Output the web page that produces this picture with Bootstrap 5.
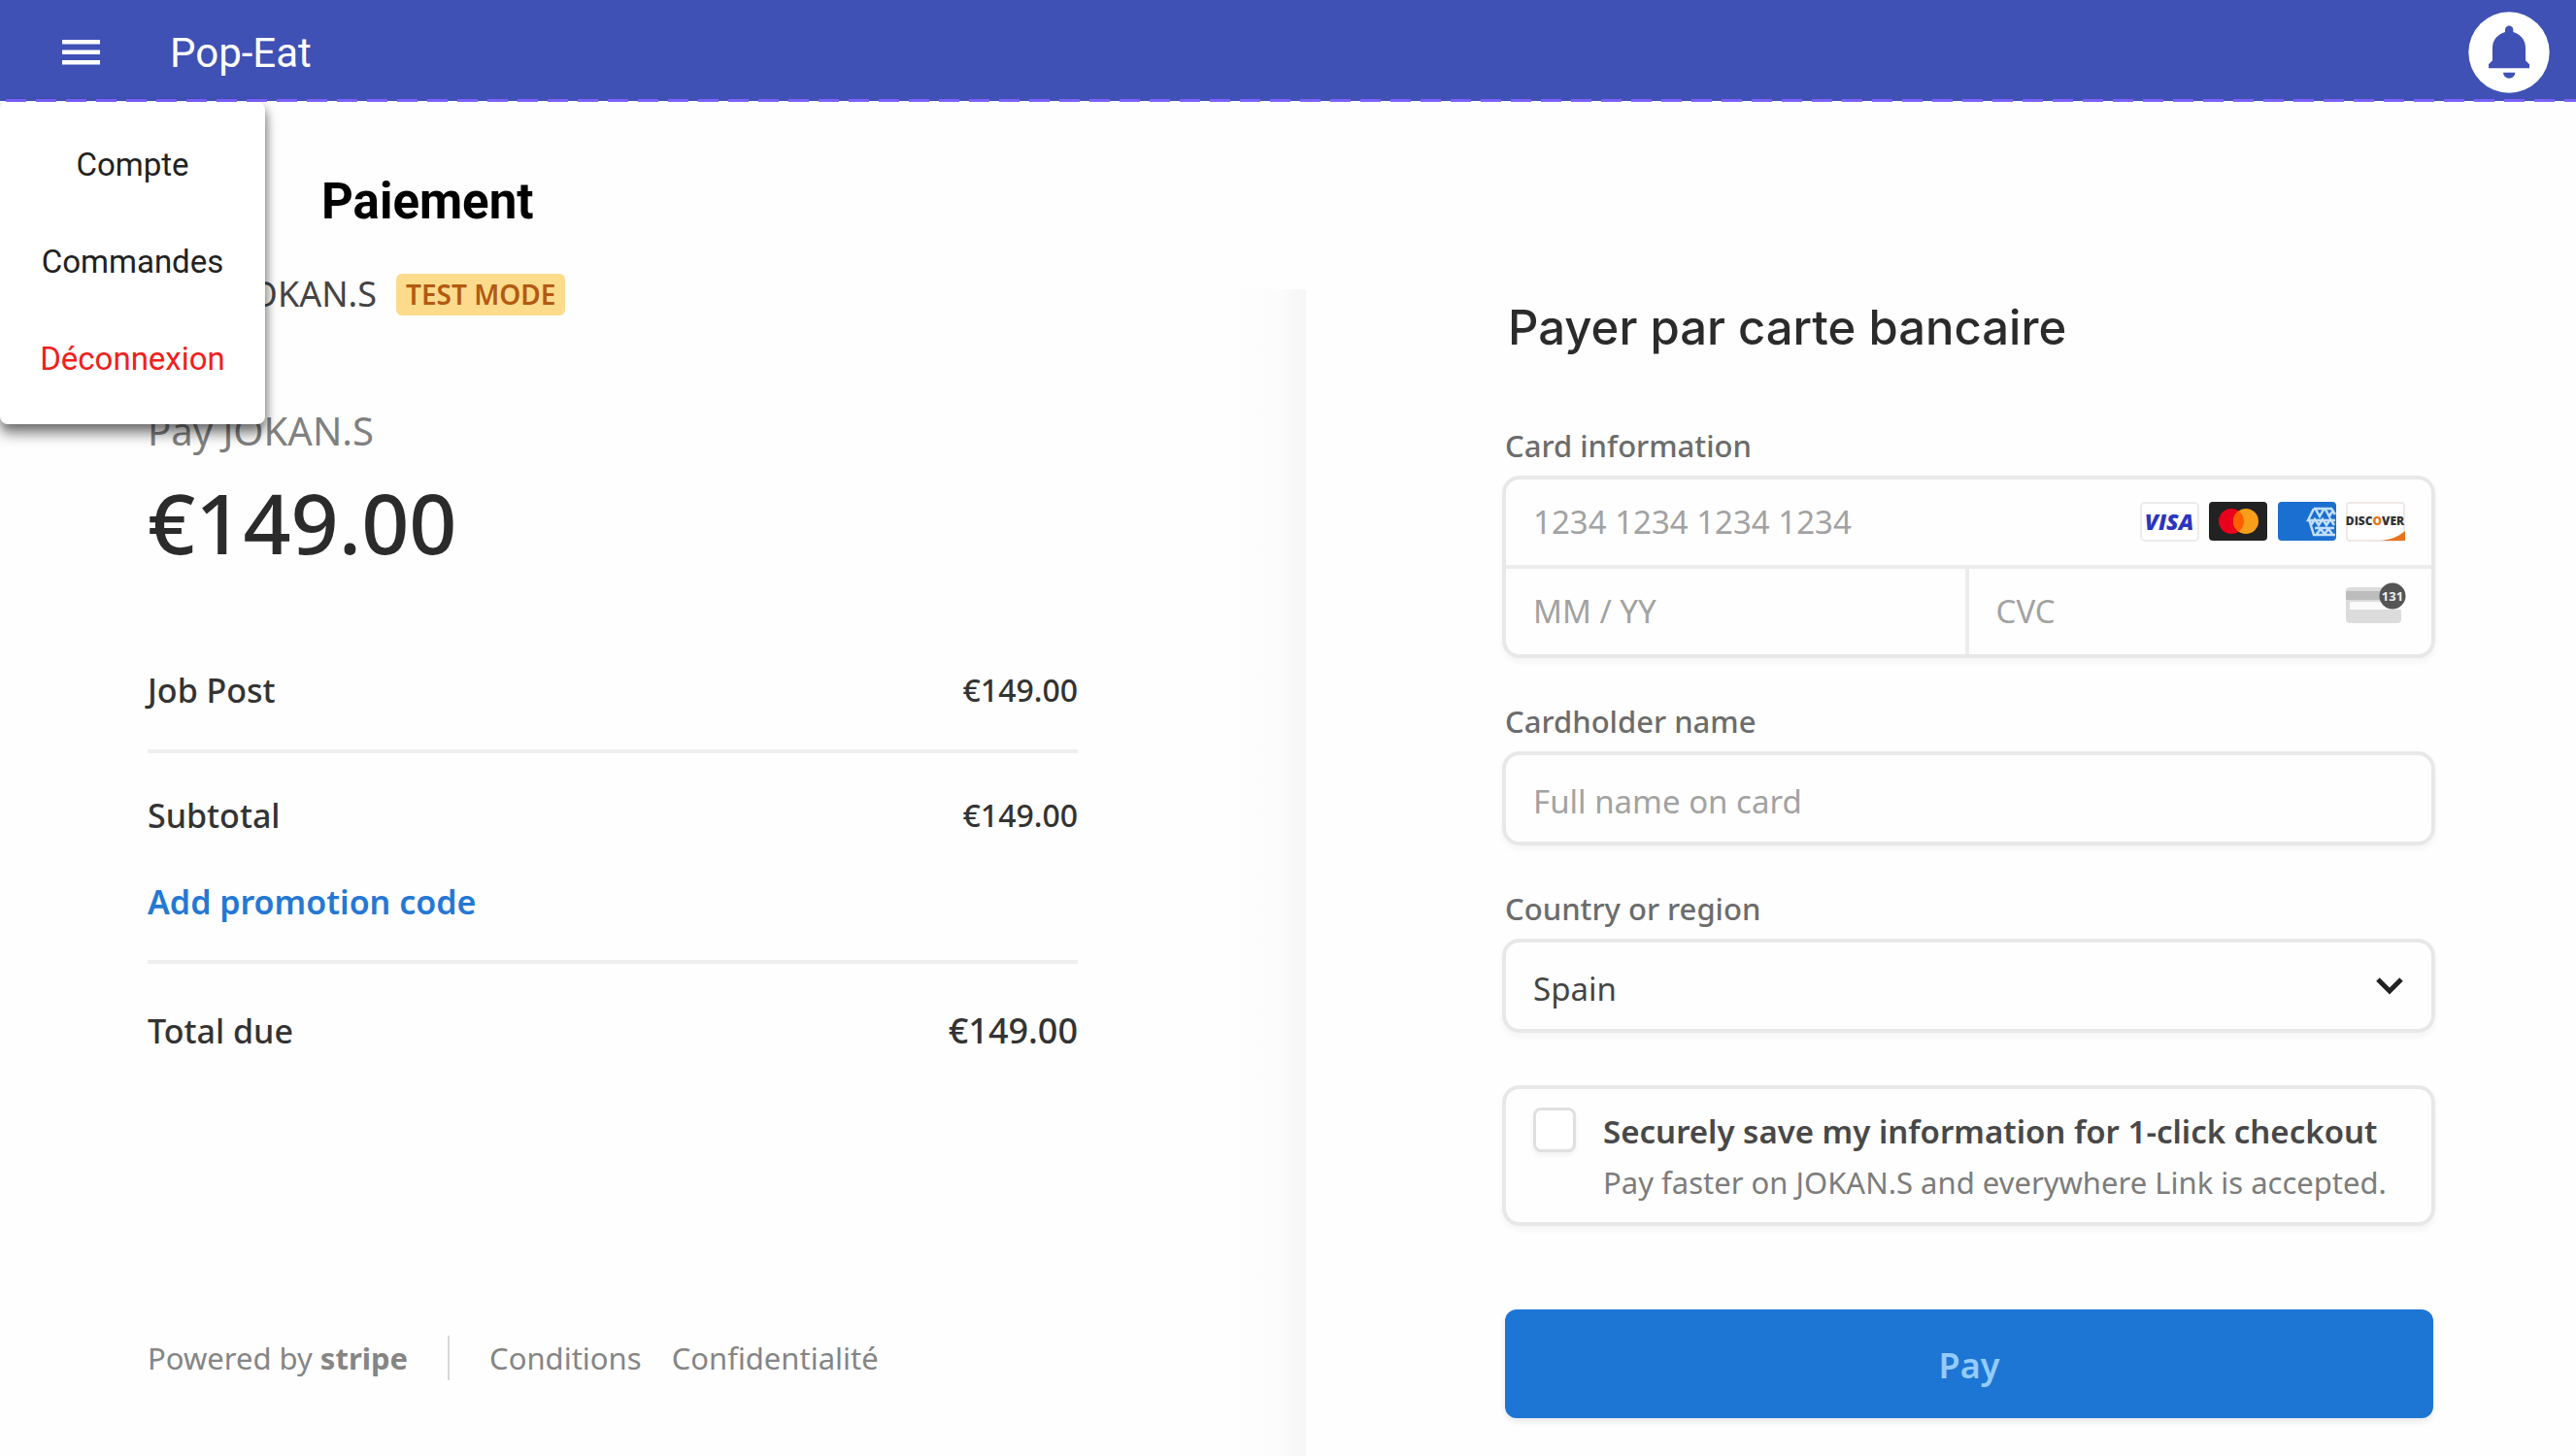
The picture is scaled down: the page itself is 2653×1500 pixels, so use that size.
<!DOCTYPE html>
<html lang="fr">
<head>
<meta charset="utf-8">
<meta name="viewport" content="width=device-width, initial-scale=1">
<title>Pop-Eat – Paiement</title>
<link rel="stylesheet" href="https://cdn.jsdelivr.net/npm/bootstrap@5.3.0/dist/css/bootstrap.min.css">
<script src="https://cdn.jsdelivr.net/npm/bootstrap@5.3.0/dist/js/bootstrap.bundle.min.js" defer></script>
<style>
  body { font-family: "Noto Sans", "Open Sans", sans-serif; font-size: 34px; line-height: 48px; color: #333; background: #fefefe; }

  /* Top bar */
  .topbar { background: #3f51b5; height: 104px; padding: 4px 27px 0 64px; font-family: Roboto, sans-serif; }
  .topbar::after { content: ""; position: absolute; left: 0; right: 0; bottom: -1px; height: 3px; background: repeating-linear-gradient(90deg, transparent 0 6px, #7b61ff 6px 27px, transparent 27px 31px); }
  .brand-name { font-size: 42px; line-height: 50px; margin-left: 72px; padding-top: 2px; }
  .side-menu { top: 105px; left: 0; width: 273px; padding: 15px 0 17px; background: #fff; border-radius: 8px; box-shadow: 0 10px 14px rgba(0,0,0,.45), 2px 4px 8px rgba(0,0,0,.22); z-index: 5; }
  .side-menu a { font-size: 33px; line-height: 48px; padding: 26px 0; color: #212121; text-align: center; }
  .side-menu a.logout { color: #f02020; }

  .page-title { font: 700 51px/64px Roboto, sans-serif; color: #000; padding: 72px 0 36px 331px; }

  /* Order summary */
  .summary { flex: 0 0 50.7%; padding: 0 235px 60px 152px; background: linear-gradient(90deg, #fefefe, #fcfcfc 60%, #f6f6f6) no-repeat right 22px / 76px 100%; }
  .merchant { height: 54px; margin-left: 96px; gap: 20px; color: #444; font-size: 36px; }
  .test-tag { font-size: 28px; line-height: 43px; font-weight: 600; padding: 0 10px; color: #b35a12; background: #fcdc8c; border-radius: 6px; }
  .pay-to { font-size: 40px; margin-top: 90px; color: #808080; }
  .pay-total { font-size: 86px; line-height: 96px; margin-top: 22px; font-weight: 500; color: #2b2b2b; }
  .order-line { font-weight: 500; }
  .order-line .amount { font-size: 32px; }
  .order-line .amount-due { font-size: 36px; }
  .first-line { margin-top: 101px; padding-bottom: 37px; border-bottom: 4px solid #efefef; }
  .subtotal { margin-top: 40px; }
  .promo { margin-top: 41px; padding-bottom: 36px; border-bottom: 4px solid #efefef; }
  .promo a { color: #2478d4; font-weight: 600; }
  .due { margin-top: 45px; }
  .legal { margin-top: 289px; font-size: 31px; color: #858585; }
  .legal a { color: inherit; }
  .legal .divider { width: 2px; height: 46px; margin: 0 41px; background: #d8d8d8; }
  .legal .terms { margin-right: 31px; }

  /* Card form */
  .checkout { padding: 30px 145px 38px 202px; }
  .checkout h2 { font: 500 49px/64px Inter, sans-serif; color: #2b2b2b; margin: 0 0 0 6px; }
  .field-label { display: block; font-size: 31px; font-weight: 500; color: #6c6c6c; margin: 41px 0 7px 3px; }
  .first-label { margin-top: 65px; }
  .field-box { border: 4px solid #e8e8e8; border-radius: 18px; background: #fefefe; box-shadow: 0 4px 6px rgba(0,0,0,.04); }
  .checkout .form-control, .checkout .form-select { border-width: 0; background-color: transparent; font-size: 33px; line-height: 48px; padding: 0 28px; color: #444; border-radius: 0; }
  .checkout .form-control::placeholder { color: #a2a2a2; opacity: 1; }
  .card-number { height: 92px; padding-right: 26px; border-bottom: 4px solid #ececec; }
  .card-extra { height: 88px; }
  .card-extra .expiry { border-right: 4px solid #ececec; }
  .card-extra .cvc { padding-right: 26px; }
  .checkout .single { border: 4px solid #e8e8e8; border-radius: 18px; height: 97px; padding-top: 6px; box-shadow: 0 4px 6px rgba(0,0,0,.04); }
  .checkout .form-select { background-image: url("data:image/svg+xml,%3Csvg xmlns='http://www.w3.org/2000/svg' viewBox='0 0 30 20'%3E%3Cpath d='M3 3l12 12L27 3' fill='none' stroke='%23222' stroke-width='5'/%3E%3C/svg%3E"); background-size: 30px 20px; background-position: right 28px center; }
  .save-box { margin-top: 54px; padding: 18px 28px 15px; gap: 28px; }
  .save-box .form-check-input { width: 44px; height: 46px; margin: 1px 0 0; border: 3px solid #e0e0e0; border-radius: 8px; box-shadow: 0 3px 4px rgba(0,0,0,.05); }
  .save-title { display: block; font-size: 33px; line-height: 52px; font-weight: 600; color: #484848; }
  .save-note { display: block; font-size: 31px; line-height: 52px; color: #7c7c7c; }
  .pay-btn { margin: 86px 2px 0 3px; height: 112px; padding-top: 10px; border-radius: 12px; font-size: 36px; font-weight: 600; color: #94cbff; background: #1d76d3; box-shadow: 0 4px 6px rgba(0,0,0,.08); }
</style>
</head>
<body class="min-vh-100 d-flex flex-column">

<header class="topbar position-relative d-flex align-items-center text-white">
  <button type="button" class="btn p-0 border-0 d-flex" aria-label="Menu">
    <svg width="39" height="26" viewBox="0 0 39 26" fill="#fff"><path d="M0 0h39v4.500H0zM0 10.500h39V15H0zM0 21h39v4.500H0z"/></svg>
  </button>
  <span class="brand-name">Pop-Eat</span>
  <button type="button" class="btn p-0 border-0 d-flex ms-auto" aria-label="Notifications">
    <svg width="84" height="84" viewBox="276 37 252 252"><circle cx="402" cy="163" r="125" fill="#fff"/><path fill="#3f51b5" d="M390 100V93a12.500 12.500 0 0 1 25 0v7C437 106 453 125 453 148v40l12 12v12H339v-12l12-12v-40C351 125 368 106 390 100ZM384 225h37a18.500 18.500 0 0 1-37 0z"/></svg>
  </button>
  <nav class="side-menu position-absolute">
    <a class="d-block text-decoration-none" href="#">Compte</a>
    <a class="d-block text-decoration-none" href="#">Commandes</a>
    <a class="d-block text-decoration-none logout" href="#">Déconnexion</a>
  </nav>
</header>

<h1 class="page-title m-0">Paiement</h1>

<main class="d-flex flex-grow-1">
  <section class="summary">
    <div class="merchant d-flex align-items-center"><span>JOKAN.S</span><span class="test-tag">TEST MODE</span></div>
    <div class="pay-to">Pay JOKAN.S</div>
    <div class="pay-total">€149.00</div>
    <div class="order-line first-line d-flex justify-content-between"><span>Job Post</span><span class="amount">€149.00</span></div>
    <div class="order-line subtotal d-flex justify-content-between"><span>Subtotal</span><span class="amount">€149.00</span></div>
    <div class="promo"><a class="text-decoration-none" href="#">Add promotion code</a></div>
    <div class="order-line due d-flex justify-content-between"><span>Total due</span><span class="amount-due">€149.00</span></div>
    <div class="legal d-flex align-items-center text-nowrap">
      <span>Powered by <b>stripe</b></span><span class="divider"></span>
      <a class="terms text-decoration-none" href="#">Conditions</a><a class="text-decoration-none" href="#">Confidentialité</a>
    </div>
  </section>

  <form class="checkout flex-fill">
    <h2>Payer par carte bancaire</h2>

    <label class="field-label first-label" for="number">Card information</label>
    <div class="field-box">
      <div class="card-number d-flex align-items-center">
        <input class="form-control" id="number" placeholder="1234 1234 1234 1234">
        <svg class="flex-shrink-0" width="274" height="42" viewBox="0 0 274 42">
          <rect x="1" y="1" width="59" height="39" rx="4" fill="#fff" stroke="#ececec" stroke-width="2"/>
          <text x="30" y="29" text-anchor="middle" font-family="Open Sans, sans-serif" font-size="23" font-weight="800" font-style="italic" fill="#2b35c0">VISA</text>
          <rect x="71" width="60" height="40" rx="4" fill="#222"/>
          <circle cx="94" cy="20" r="13" fill="#eb001b"/><circle cx="109" cy="20" r="13" fill="#f79e1b"/><path d="M101.500 9.400a13 13 0 0 1 0 21.200a13 13 0 0 1 0-21.200z" fill="#ff5f00"/>
          <rect x="142" width="60" height="40" rx="4" fill="#1b6fd0"/>
          <g fill="none" stroke="#c4e0fb" stroke-width="2.500"><path d="M179 7h18l4 6M179 7l-6 12h28M174 18l5 16h22M181 8l4 7 4-7M191 8l4 7 4-7M176 24l4-6 4 6 4-6 4 6 4-6 4 6M180 27h20M182 33l4-5 4 5 4-5 4 5"/></g>
          <rect x="213" y="1" width="59" height="39" rx="3" fill="#fff" stroke="#f0e8e6" stroke-width="2"/>
          <path d="M248 40c10-1 18-4 25-10v10z" fill="#e8731c"/>
          <text x="242" y="24" text-anchor="middle" font-family="Open Sans, sans-serif" font-size="12" font-weight="800" fill="#333">DISC<tspan fill="#e8731c">O</tspan>VER</text>
        </svg>
      </div>
      <div class="card-extra d-flex">
        <div class="expiry w-50 d-flex"><input class="form-control" aria-label="Expiration" placeholder="MM / YY"></div>
        <div class="cvc w-50 d-flex align-items-center"><input class="form-control" aria-label="CVC" placeholder="CVC">
          <svg class="flex-shrink-0 mb-3" width="62" height="44" viewBox="0 0 62 44">
            <rect y="5" width="57" height="37" rx="4" fill="#dcdcdc"/><rect y="9" width="57" height="9" fill="#bdbdbd"/><rect x="4" y="20" width="53" height="8" fill="#fafafa"/>
            <circle cx="48" cy="14" r="13.500" fill="#555"/><text x="48" y="19" text-anchor="middle" font-family="Open Sans, sans-serif" font-size="13" font-weight="700" fill="#eee">131</text>
          </svg>
        </div>
      </div>
    </div>

    <label class="field-label" for="holder">Cardholder name</label>
    <input class="form-control single" id="holder" placeholder="Full name on card">

    <label class="field-label" for="country">Country or region</label>
    <select class="form-select single" id="country"><option>Spain</option></select>

    <div class="field-box save-box d-flex">
      <input class="form-check-input flex-shrink-0" type="checkbox" id="save">
      <label class="text-nowrap" for="save"><span class="save-title">Securely save my information for 1-click checkout</span><span class="save-note">Pay faster on JOKAN.S and everywhere Link is accepted.</span></label>
    </div>

    <div class="d-flex"><button type="button" class="btn pay-btn flex-fill">Pay</button></div>
  </form>
</main>
</body>
</html>
